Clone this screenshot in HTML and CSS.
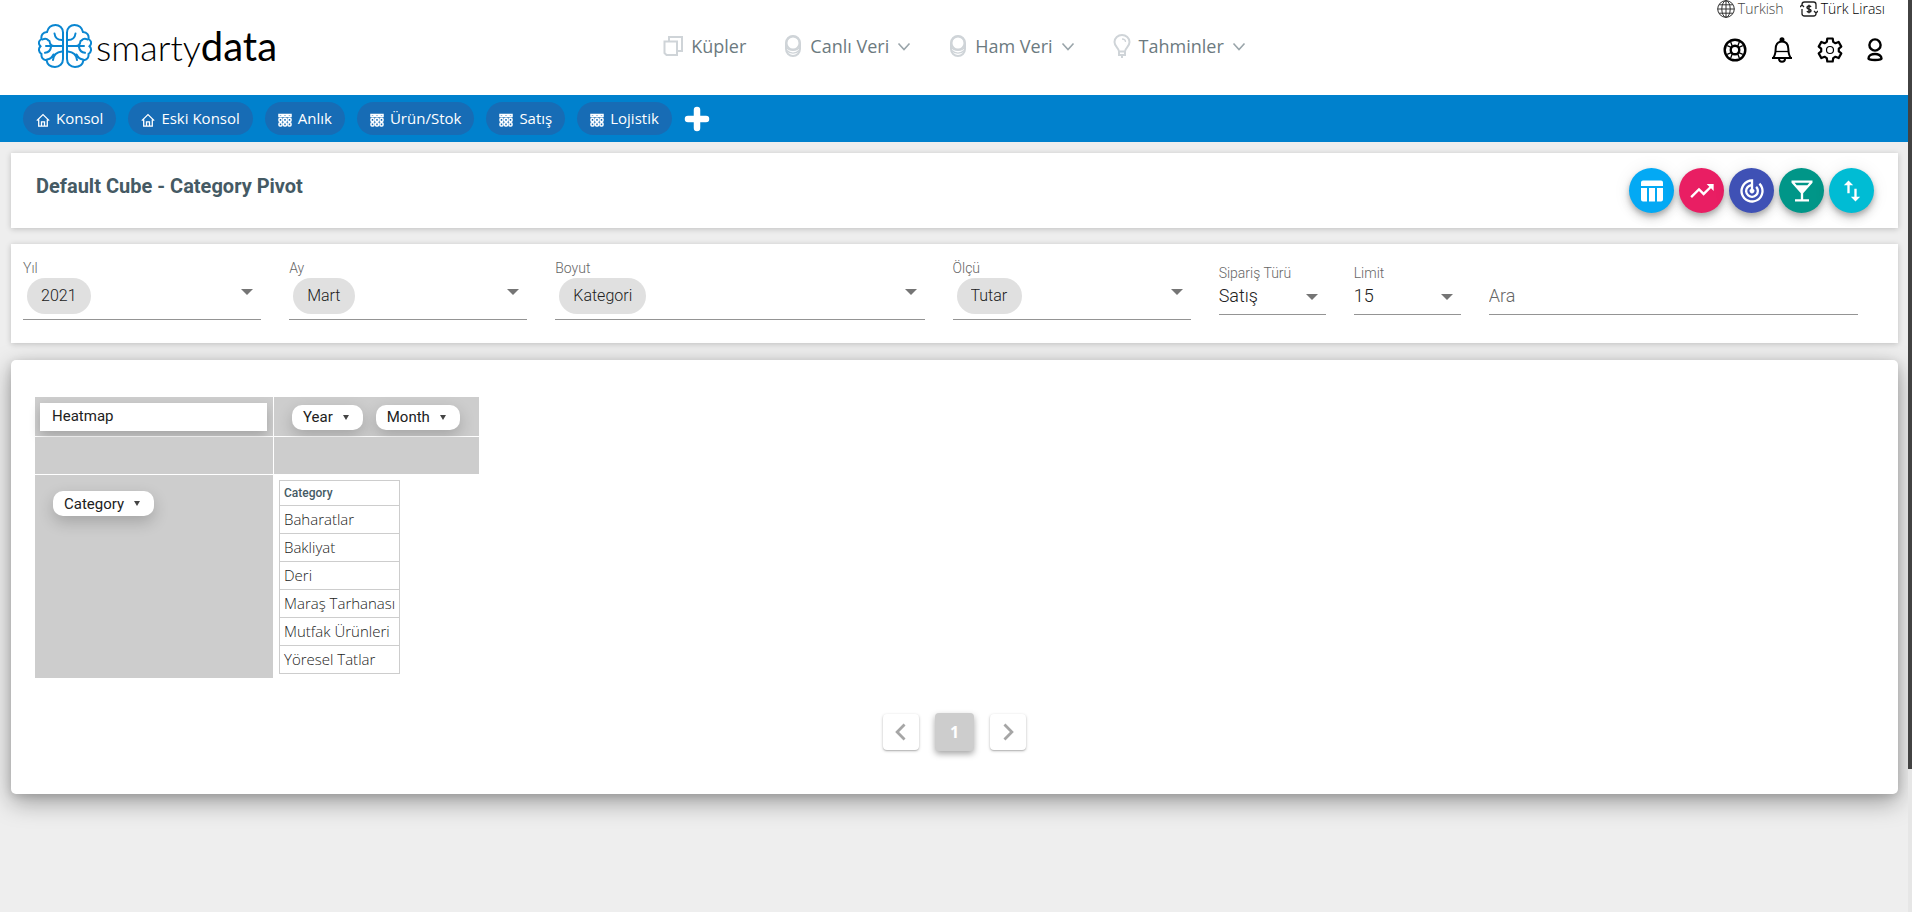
FILE: index.html
```html
<!DOCTYPE html>
<html lang="tr">
<head>
<meta charset="utf-8">
<title>smartydata</title>
<meta name="viewport" content="width=device-width, initial-scale=1">
<link rel="stylesheet" href="styles.css">
</head>
<body>
<svg class="sprite" aria-hidden="true">
  <symbol id="home" viewBox="0 0 14 14"><path d="M.8 7.6 7 1.6l6.200 6M2.700 6.400v6.800h8.600V6.400M5.500 13V8.800h3V13" fill="none" stroke="currentColor" stroke-width="1.300"/></symbol>
  <symbol id="grid" viewBox="0 0 14 14"><g fill="none" stroke="currentColor" stroke-width="1.500"><path d="M1 1.500h3v2H1zM5.500 1.500h3v2h-3zM10 1.500h3v2h-3z"/><rect x="1" y="5.200" width="3" height="3.300" rx="1"/><rect x="5.500" y="5.200" width="3" height="3.300" rx="1"/><rect x="10" y="5.200" width="3" height="3.300" rx="1"/><rect x="1" y="9.700" width="3" height="3.300" rx="1"/><rect x="5.500" y="9.700" width="3" height="3.300" rx="1"/><rect x="10" y="9.700" width="3" height="3.300" rx="1"/></g></symbol>
  <symbol id="coins" viewBox="0 0 18 24"><g fill="none" stroke="currentColor" stroke-width="2"><rect x="2" y="2" width="14" height="20" rx="7"/><circle cx="9" cy="9" r="6.500"/><path d="M2.500 13c2 4.500 11 4.500 13 0M3 16.500c3 3.500 9 3.500 12 0" stroke-width="1.300"/></g></symbol>
  <symbol id="down" viewBox="0 0 14 14"><path d="m1.500 4.500 5.500 6 5.500-6" fill="none" stroke="currentColor" stroke-width="1.600"/></symbol>
</svg>

<header class="header">
  <a class="logo" href="#" aria-label="smartydata">
    <svg width="54" height="46" viewBox="0 0 54 46" fill="none" stroke="#0a86d1" stroke-width="2" stroke-linecap="round">
      <g id="half">
        <path d="M25 9.500C25 5 21.500 2 17.500 2c-4.500 0-7.500 3-8.500 7C5 9.300 2.800 12 3.500 16 .2 18 .2 21 2.500 23.200.2 25.500.4 29 3.500 31c-.5 3.500 1.500 6 5 6.300C9.300 41.500 12.500 44 17 44c4.500 0 8-3.200 8-8z"/>
        <path d="M24 17c-4.500 0-7-2.500-7.500-6.500M4.500 16.500c2-1.200 4.500-.8 6 1M11.500 18c.3 3 1.500 5 4.500 5h8M15 23H8M13 24c-.5 3.500-3 5.500-6 5.800M24 28.500c-5.500.5-8.500 3.500-9 8.500M9 36.500c3-.3 5-2 6.500-5"/>
      </g>
      <use href="#half" transform="matrix(-1 0 0 1 54 0)"/>
    </svg>
    <span class="wordmark">smarty<b>data</b></span>
  </a>

  <nav class="menu">
    <a href="#"><svg width="20" height="24" viewBox="0 0 20 24" fill="none" stroke="currentColor" stroke-width="2"><path d="M6 7V3h13v14h-5M1.500 7.500H14V21H3.500l-2-2z"/></svg>Küpler</a>
    <a href="#"><svg width="18" height="24"><use href="#coins"/></svg>Canlı Veri<svg class="chev" width="14" height="14"><use href="#down"/></svg></a>
    <a href="#"><svg width="18" height="24"><use href="#coins"/></svg>Ham Veri<svg class="chev" width="14" height="14"><use href="#down"/></svg></a>
    <a href="#"><svg width="18" height="24" viewBox="0 0 18 24" fill="none" stroke="currentColor" stroke-width="2"><path d="M6 17.500c0-3.500-4.500-4.500-4.500-9.500C1.500 4 5 1 9 1s7.500 3 7.500 7c0 5-4.500 6-4.500 9.500zM6 17.500v3.500h6v-3.500M8 23h2"/><path d="M9 5c2 0 3.500 1.200 3.500 3" stroke-width="1.300"/></svg>Tahminler<svg class="chev" width="14" height="14"><use href="#down"/></svg></a>
  </nav>

  <div class="account">
    <div class="locale">
      <a class="lang" href="#"><svg width="18" height="18" viewBox="0 0 18 18" fill="none" stroke="#333" stroke-width="1"><circle cx="9" cy="9" r="8.300"/><ellipse cx="9" cy="9" rx="4.200" ry="8.300"/><path d="M9 .7v16.600M.7 9h16.600M2 4.800h14M2 13.200h14"/></svg>Turkish</a>
      <a class="money" href="#"><svg width="18" height="18" viewBox="0 0 18 18" fill="none" stroke="#222" stroke-width="1.300"><path d="M2 6V4.500A2.500 2.500 0 0 1 4.500 2h9A2.500 2.500 0 0 1 16 4.500V9M16 12v1.500a2.500 2.500 0 0 1-2.500 2.500h-9A2.500 2.500 0 0 1 2 13.500V9M0 7l2-2 2 2M14 11l2 2 2-2"/><path d="M11 6.800c-.8-1.200-4-1.200-4 .6C7 9.500 11 8.500 11 10.700c0 1.800-3.300 1.800-4 .5M9 4.800v8.400" stroke-width="1.500"/></svg>Türk Lirası</a>
    </div>
    <div class="tools">
      <button aria-label="Destek"><svg width="24" height="26" viewBox="0 0 24 26" fill="none" stroke="#000" stroke-width="2.400"><circle cx="12" cy="13" r="10.300"/><circle cx="12" cy="13" r="4.300"/><g stroke-width="1.300"><path d="m7.700 5 1.500 4M4.200 8.700l4 1.600M16.300 5l-1.500 4M19.800 8.700l-4 1.600M7.700 21l1.500-4M4.200 17.300l4-1.600M16.300 21l-1.500-4M19.800 17.300l-4-1.600"/></g></svg></button>
      <button aria-label="Bildirimler"><svg width="24" height="26" viewBox="0 0 24 26" fill="none" stroke="#000" stroke-width="2"><path d="M2 21h20M3.500 20.500c2-2.500 2-4.500 2.200-9 .2-4.500 2.800-7 6.300-7s6.100 2.500 6.300 7c.2 4.500.2 6.500 2.200 9"/><path d="M5.500 14.500h13" stroke-width="1.300"/><path d="M9 22c0 3.500 6 3.500 6 0"/><circle cx="12" cy="2.800" r="1.500" fill="#000"/></svg></button>
      <button aria-label="Ayarlar"><svg width="26" height="26" viewBox="0 0 26 26" fill="none" stroke="#000" stroke-width="2.200" stroke-linejoin="round"><path d="M10.300 1.500h5.400l.5 3.400 2.200 1.300 3.200-1.300 2.700 4.700-2.500 2v2.800l2.500 2-2.700 4.700-3.200-1.300-2.200 1.300-.5 3.400h-5.400l-.5-3.400-2.200-1.300-3.200 1.300-2.700-4.700 2.500-2v-2.800l-2.500-2 2.700-4.700 3.200 1.300 2.200-1.300z"/><circle cx="13" cy="13" r="3.500" stroke-width="1.200"/></svg></button>
      <button aria-label="Profil"><svg width="18" height="26" viewBox="0 0 18 26" fill="none" stroke="#000" stroke-width="2.400"><circle cx="9" cy="8" r="5.600"/><path d="M2.500 21.500c0-6 13-6 13 0 0 2-13 2-13 0z"/></svg></button>
    </div>
  </div>
</header>

<nav class="shortcuts">
  <a href="#"><svg width="14" height="14"><use href="#home"/></svg>Konsol</a>
  <a href="#"><svg width="14" height="14"><use href="#home"/></svg>Eski Konsol</a>
  <a href="#"><svg width="14" height="14"><use href="#grid"/></svg>Anlık</a>
  <a href="#"><svg width="14" height="14"><use href="#grid"/></svg>Ürün/Stok</a>
  <a href="#"><svg width="14" height="14"><use href="#grid"/></svg>Satış</a>
  <a href="#"><svg width="14" height="14"><use href="#grid"/></svg>Lojistik</a>
  <button aria-label="Ekle"><svg width="26" height="26" viewBox="0 0 26 26" stroke="#fff" stroke-width="6.500" stroke-linecap="round"><path d="M13 4v18M4 13h18"/></svg></button>
</nav>

<main class="page">
  <section class="card title-card">
    <h1>Default Cube - Category Pivot</h1>
    <div class="fabs">
      <button class="fab blue" aria-label="Tablo"><svg width="24" height="24" viewBox="0 0 24 24" fill="#fff"><path d="M3 1.500h18a2 2 0 0 1 2 2V7H1V3.500a2 2 0 0 1 2-2zM1 9h6v13.500H3a2 2 0 0 1-2-2zM9 9h6v13.500H9zM17 9h6v11.500a2 2 0 0 1-2 2h-4z"/></svg></button>
      <button class="fab pink" aria-label="Grafik"><svg width="28" height="28" viewBox="0 0 24 24" fill="#fff"><path d="m16 6 2.290 2.290-4.880 4.880-4-4L2 16.590 3.410 18l6-6 4 4 6.300-6.290L22 12V6z"/></svg></button>
      <button class="fab indigo" aria-label="Hedef"><svg width="28" height="28" viewBox="0 0 24 24" fill="#fff"><path d="m19.070 4.930-1.410 1.410A8 8 0 1 1 11 4.070v2.020A6 6 0 1 0 18 12c0-1.660-.67-3.160-1.760-4.240l-1.410 1.410A4 4 0 1 1 11 8.140v2.140A2 2 0 1 0 13 10.280V2h-1a10 10 0 1 0 7.070 2.930z"/></svg></button>
      <button class="fab teal" aria-label="Filtre"><svg width="28" height="28" viewBox="0 0 24 24" fill="#fff"><path d="M21 5V3H3v2l8 9v5H6v2h12v-2h-5v-5zM7.430 7 5.660 5h12.690l-1.780 2z"/></svg></button>
      <button class="fab cyan" aria-label="Sırala"><svg width="28" height="28" viewBox="0 0 24 24" fill="#fff"><path d="M16 17.010V10h-2v7.010h-3L15 21l4-3.990zM9 3 5 6.990h3V14h2V6.990h3z"/></svg></button>
    </div>
  </section>

  <section class="card filters">
    <div class="field chips"><label for="yil">Yıl</label><div class="control"><select id="yil" class="chip"><option>2021</option></select></div></div>
    <div class="field chips"><label for="ay">Ay</label><div class="control"><select id="ay" class="chip"><option>Mart</option></select></div></div>
    <div class="field chips"><label for="boyut">Boyut</label><div class="control"><select id="boyut" class="chip"><option>Kategori</option></select></div></div>
    <div class="field chips"><label for="olcu">Ölçü</label><div class="control"><select id="olcu" class="chip"><option>Tutar</option></select></div></div>
    <div class="field"><label for="tur">Sipariş Türü</label><div class="control"><select id="tur"><option>Satış</option></select></div></div>
    <div class="field"><label for="limit">Limit</label><div class="control"><select id="limit"><option>15</option></select></div></div>
    <div class="field search"><div class="control"><input type="text" placeholder="Ara" aria-label="Ara"></div></div>
  </section>

  <section class="card report">
    <div class="pivot">
      <div class="cell"><select class="renderer" aria-label="Görünüm"><option>Heatmap</option></select></div>
      <div class="cell axis"><button class="attr">Year <i></i></button><button class="attr">Month <i></i></button></div>
      <div class="cell"></div>
      <div class="cell"></div>
      <div class="cell rows"><button class="attr">Category <i></i></button></div>
      <div class="output">
        <table>
          <thead><tr><th>Category</th></tr></thead>
          <tbody>
            <tr><td>Baharatlar</td></tr>
            <tr><td>Bakliyat</td></tr>
            <tr><td>Deri</td></tr>
            <tr><td>Maraş Tarhanası</td></tr>
            <tr><td>Mutfak Ürünleri</td></tr>
            <tr><td>Yöresel Tatlar</td></tr>
          </tbody>
        </table>
      </div>
    </div>
    <nav class="pager" aria-label="Sayfalar">
      <button aria-label="Önceki"><svg width="28" height="28" viewBox="0 0 24 24"><path d="M15.400 7.400 14 6l-6 6 6 6 1.400-1.400-4.600-4.600z" transform="matrix(1.200 0 0 1.200 -2.600 -2.400)" fill="#a6a6a6"/></svg></button>
      <button class="current" aria-current="page">1</button>
      <button aria-label="Sonraki"><svg width="28" height="28" viewBox="0 0 24 24"><path d="M8.600 16.600 13.200 12 8.600 7.400 10 6l6 6-6 6z" transform="matrix(1.200 0 0 1.200 -2.200 -2.400)" fill="#a6a6a6"/></svg></button>
    </nav>
  </section>
</main>
<div class="scrolltrack"><div class="thumb"></div></div>
</body>
</html>
```

FILE: styles.css
```css
* { box-sizing: border-box; }
body {
  margin: 0;
  padding-right: 4px;
  min-height: 100vh;
  background: #eee;
  font-family: Roboto, sans-serif;
  color: #212121;
}
a { color: inherit; text-decoration: none; }
button, select, input { font: inherit; color: inherit; border: 0; background: none; padding: 0; margin: 0; }
button { cursor: pointer; }
select { appearance: none; }
svg { flex: none; }
.sprite { position: absolute; width: 0; height: 0; }

.header {
  display: grid;
  grid-template-columns: 1fr auto 1fr;
  height: 95px;
  background: #fff;
  font-family: "Open Sans", sans-serif;
}
.logo { display: flex; align-items: center; gap: 4px; padding-left: 38px; height: 92px; justify-self: start; }
.wordmark { font: 300 36px/44px Lato, sans-serif; color: #000; }
.wordmark b { font-size: 40px; font-weight: 400; }
.menu { display: flex; align-items: center; gap: 38px; height: 92px; padding-left: 1px; font-size: 18px; color: #6c7a80; }
.menu a { display: flex; align-items: center; gap: 8px; }
.menu svg { color: #cfd4d8; }
.menu .chev { color: #9aa5aa; }
.account { justify-self: end; display: flex; flex-direction: column; gap: 19px; padding-right: 20px; }
.locale { display: flex; justify-content: flex-end; gap: 16px; padding-right: 3px; font-size: 14px; font-weight: 300; line-height: 18px; }
.locale a { display: flex; align-items: center; gap: 3px; }
.lang { color: #444; }
.money { color: #000; }
.tools { display: flex; align-items: center; justify-content: flex-end; gap: 23px; padding-right: 4px; }
.tools button { display: flex; }

.shortcuts {
  display: flex;
  align-items: center;
  gap: 12px;
  height: 47px;
  padding: 0 23px;
  background: #0081cd;
  color: #fff;
  font: 15px/20px "Open Sans", sans-serif;
}
.shortcuts a { display: flex; align-items: center; gap: 6px; height: 33px; padding: 0 13px 2px; border-radius: 17px; background: #176cb5; }
.shortcuts a svg { margin-top: 4px; }
.shortcuts button { display: flex; }

.page { padding: 11px 10px 0 11px; }
.card { background: #fff; box-shadow: 0 1px 6px rgba(0, 0, 0, .2); }
.title-card { display: flex; justify-content: space-between; padding: 15px 24px 15px 25px; min-height: 75px; }
h1 { margin: 6px 0 0; font-size: 20px; line-height: 24px; font-weight: 700; color: #455a64; }
.fabs { display: flex; gap: 5px; }
.fab { display: flex; align-items: center; justify-content: center; width: 45px; height: 45px; border-radius: 50%; box-shadow: 0 3px 5px rgba(0, 0, 0, .2), 0 6px 10px rgba(0, 0, 0, .14), 0 1px 18px rgba(0, 0, 0, .08); }
.blue { background: #03a9f4; }
.pink { background: #e91e63; }
.indigo { background: #3f51b5; }
.teal { background: #009688; }
.cyan { background: #00bcd4; }

.filters {
  display: grid;
  grid-template-columns: 238fr 238fr 369fr 238fr 107fr 107fr 369fr;
  gap: 28px;
  margin-top: 16px;
  padding: 16px 40px 22px 12px;
  min-height: 99px;
  align-items: start;
}
.field { display: flex; flex-direction: column; padding-top: 5px; font-size: 18px; font-weight: 300; }
.field.chips { padding-top: 0; font-size: 16px; }
.field label { font-size: 14px; line-height: 16px; color: #666; }
.control { display: grid; align-items: center; height: 34px; padding-bottom: 4px; border-bottom: 1px solid #949494; }
.control > *, .control::after { grid-area: 1 / 1; }
.control select { width: 100%; height: 26px; }
.control::after { content: ""; justify-self: end; margin: 2px 8px 0 0; border: 6px solid transparent; border-top-color: #757575; border-bottom: 0; pointer-events: none; }
.chips .control { height: 44px; align-items: start; }
.control .chip { justify-self: start; width: auto; height: 36px; margin: 2px 0 0 4px; padding: 0 14px 1px; border-radius: 18px; background: #e0e0e0; }
.chips .control::after { margin-top: 13px; }
.search { padding-top: 21px; }
.search .control::after { content: none; }
.search input { width: 100%; height: 26px; outline: 0; }
.search input::placeholder { color: #666; }

.report { margin-top: 17px; padding: 37px 24px 43px; border-radius: 5px; box-shadow: 0 8px 24px rgba(0, 0, 0, .35), 0 2px 8px rgba(0, 0, 0, .12); }
.pivot { display: inline-grid; grid-template-columns: 238px 205px; gap: 1px; font-size: 15px; }
.cell { background: #cdcdcd; min-height: 37px; }
.cell:first-child { padding: 6px 6px 5px 5px; }
.renderer { display: block; width: 100%; height: 28px; padding: 0 12px 3px; background: #fff; box-shadow: 0 5px 12px rgba(0, 0, 0, .2); }
.axis { display: flex; align-items: center; gap: 13px; padding: 1px 0 0 18px; }
.attr { display: inline-flex; align-items: center; gap: 10px; height: 25px; padding: 0 14px 0 11px; border-radius: 10px; background: #fff; box-shadow: 0 6px 16px rgba(0, 0, 0, .2); }
.attr i { border: 3px solid transparent; border-top: 5px solid #444; border-bottom: 0; }
.rows { padding: 16px 18px; }
.output { padding: 5px 5px 4px; }
table { border-collapse: collapse; font-family: "Open Sans", sans-serif; color: #222; }
th, td { border: 1px solid #cdcdcd; padding: 0 4px; text-align: left; font-size: 15px; font-weight: 300; line-height: 27px; white-space: nowrap; }
th { font: 500 12px/24px Roboto, sans-serif; color: #455a64; }
.pager { display: flex; justify-content: center; align-items: center; gap: 16px; margin-top: 35px; }
.pager button { display: flex; align-items: center; justify-content: center; width: 36px; height: 36px; border-radius: 4px; background: #fff; box-shadow: 0 1px 3px rgba(0, 0, 0, .25), 0 1px 1px rgba(0, 0, 0, .12); }
.pager .current { width: 39px; height: 38px; background: #cdcdcd; color: #fff; font: 700 16px/20px "Open Sans", sans-serif; box-shadow: 0 3px 6px rgba(0, 0, 0, .35); }

.scrolltrack { position: fixed; top: 0; right: 0; bottom: 0; width: 4px; background: #e6e6e6; }
.thumb { height: 84.300%; background: #424242; }
```
